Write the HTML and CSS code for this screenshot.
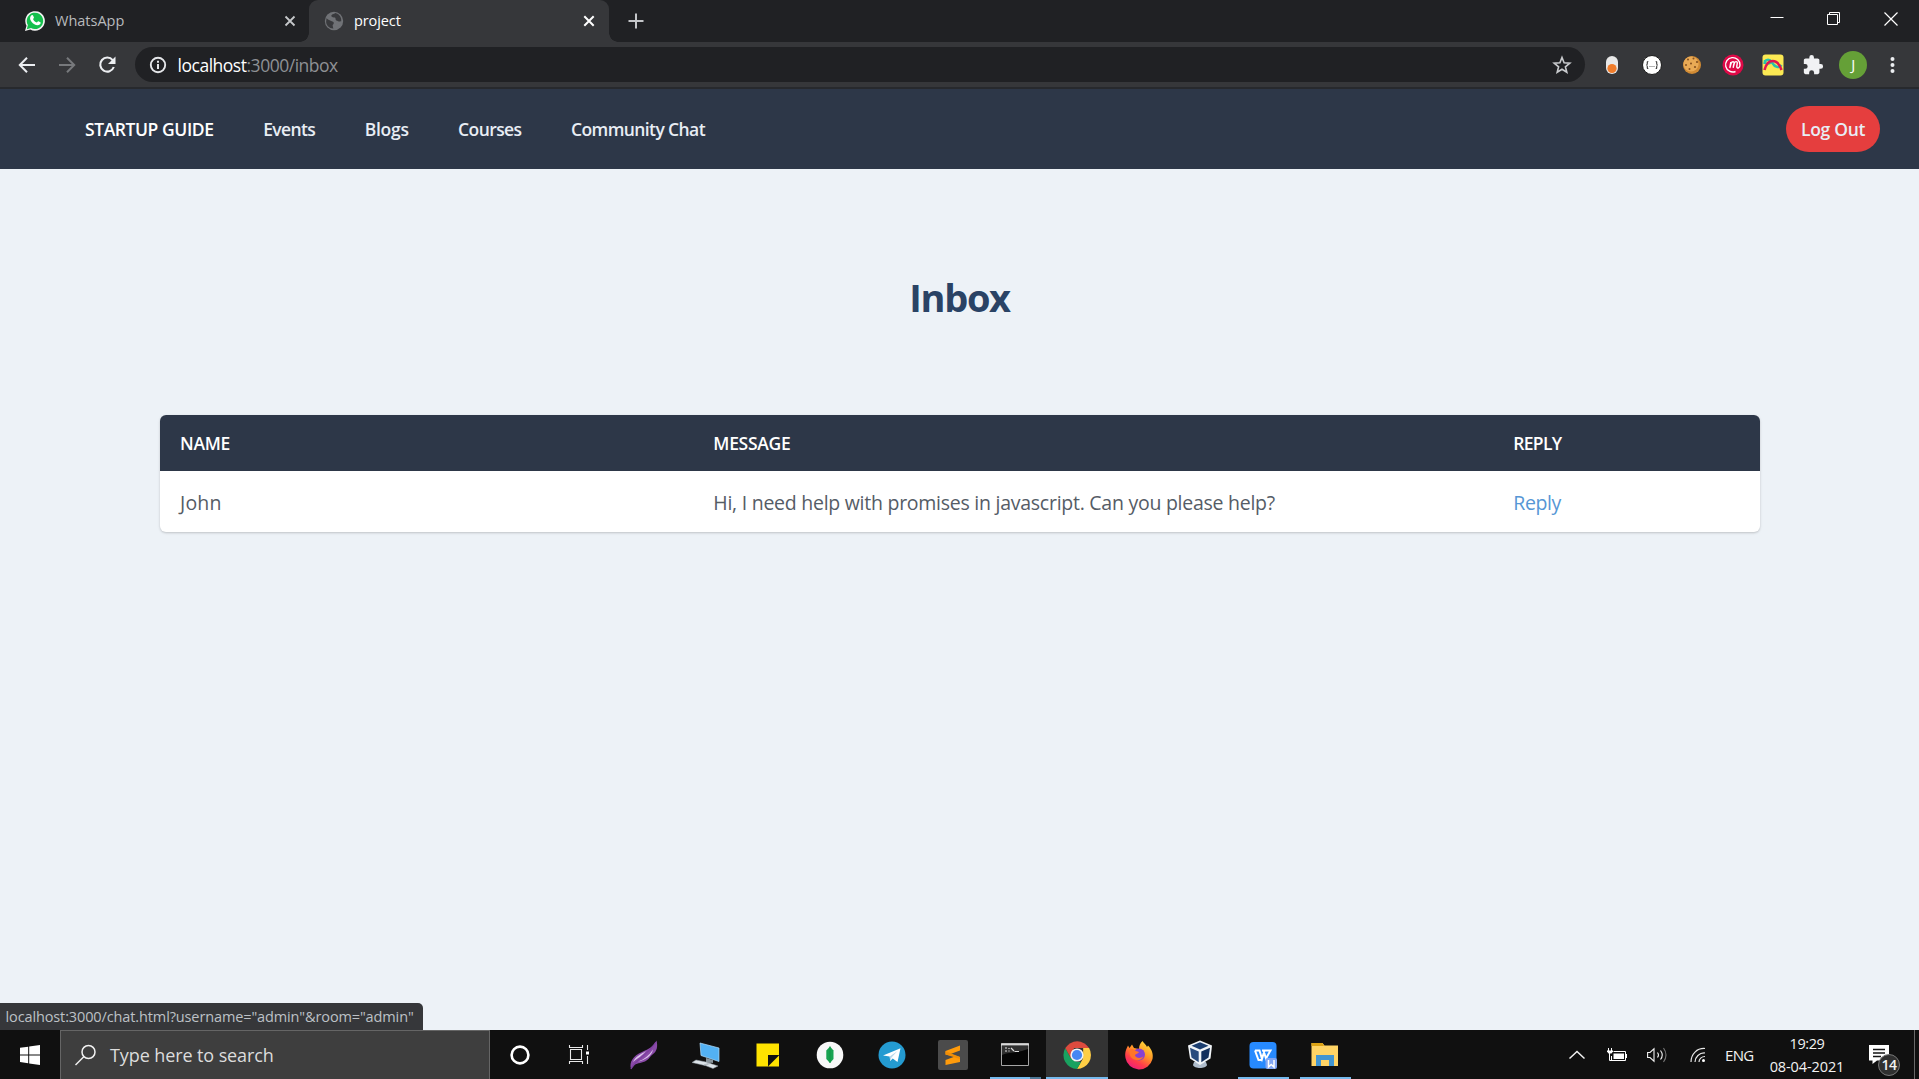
FILE: index.html
```html
<!DOCTYPE html>
<html lang="en">
<head>
<meta charset="utf-8">
<title>project</title>
<link rel="stylesheet" href="styles.css">
</head>
<body>
<div class="screen">
  <header class="tabstrip">
    <div class="tab">
      <svg class="favicon" width="22" height="22" viewBox="0 0 22 22"><path d="M1 21l1.500-5.300A9.800 9.800 0 1 1 6.300 19.500z" fill="#f4f4f4"/><path d="M2.800 19.200l1.100-4.100A8.200 8.200 0 1 1 7 18.100z" fill="#14bf4c"/><path d="M7.300 5.500c.8-.7 1.600-.5 1.900.3l.7 1.700c.2.500-.6 1.200-.9 1.600.8 1.700 2 2.800 3.800 3.500.6-.5 1-1.500 1.600-1.300l2 1c.6.400.2 1.700-.7 2.300-2.400 1.600-6-.1-8.200-2.900C5.700 9.200 5.600 7 7.300 5.500z" fill="#fff"/></svg>
      <span class="tab-title">WhatsApp</span>
      <svg class="tab-close" width="12" height="12" viewBox="0 0 12 12"><path d="M1.500 1.500l9 9M10.500 1.500l-9 9" stroke="#c6c8cb" stroke-width="1.800"/></svg>
    </div>
    <div class="tab tab-active">
      <svg class="favicon" width="20" height="20" viewBox="0 0 20 20"><circle cx="10" cy="10" r="9.200" fill="#707276"/><path d="M2.500 7.200c2 2.100 4 2.300 6.500 3.600 1.500.9.800 2.300-.4 3.100.2 1.500.4 2.300.8 3.500-4 .2-7-2.900-7.300-6.400zM11.300 1.900c-1.500 1.300-4 1.200-4 3 .3 1.500 2.400 1.100 3.700 1.700 1 .7.100 2.300 1.300 2.800 1.600.5 2.500 1.300 4.900.9.600-4-2-7.600-5.900-8.400z" fill="#393a3d"/></svg>
      <span class="tab-title">project</span>
      <svg class="tab-close" width="12" height="12" viewBox="0 0 12 12"><path d="M1.300 1.300l9.400 9.400M10.700 1.300l-9.400 9.400" stroke="#fff" stroke-width="2"/></svg>
    </div>
    <svg class="new-tab" width="16" height="16" viewBox="0 0 16 16"><path d="M8 .5v15M.5 8h15" stroke="#c4c6c9" stroke-width="2"/></svg>
    <div class="window-buttons">
      <svg width="14" height="14" viewBox="0 0 14 14"><path d="M.5 5.500h13" stroke="#fff"/></svg>
      <svg width="14" height="14" viewBox="0 0 14 14"><path d="M.5 2.500h10v10H.5zM2.500 2.500v-2h10v10h-2" fill="none" stroke="#fff"/></svg>
      <svg width="14" height="14" viewBox="0 0 14 14"><path d="M.5.5l13 13M13.500.5l-13 13" stroke="#fff" stroke-width="1.200"/></svg>
    </div>
  </header>

  <div class="toolbar">
    <div class="history">
      <svg width="18" height="18" viewBox="0 0 18 18"><path d="M17 9H2M9 1.800L1.800 9 9 16.200" fill="none" stroke="#eceef1" stroke-width="2"/></svg>
      <svg width="18" height="18" viewBox="0 0 18 18"><path d="M1 9h15M9 1.800L16.200 9 9 16.200" fill="none" stroke="#77797c" stroke-width="2"/></svg>
      <svg width="18" height="18" viewBox="0 0 18 18"><path d="M14.700 4.200A7 7 0 1 0 15.800 11" fill="none" stroke="#eceef1" stroke-width="2.100"/><path d="M17.500.5v7.500H10z" fill="#eceef1"/></svg>
    </div>
    <div class="address">
      <svg width="18" height="18" viewBox="0 0 18 18"><circle cx="9" cy="9" r="7.200" fill="none" stroke="#e4e6e9" stroke-width="1.900"/><path d="M9 8v5M9 4.700v2" stroke="#e4e6e9" stroke-width="2"/></svg>
      <span class="url">localhost<span class="url-rest">:3000/inbox</span></span>
      <svg class="star" width="20" height="20" viewBox="0 0 20 20"><path d="M10 2.500l2.100 5.300 5.700.4-4.400 3.600 1.400 5.500-4.800-3-4.800 3 1.400-5.500L2.200 8.200l5.700-.4z" fill="none" stroke="#c9cbce" stroke-width="1.600"/></svg>
    </div>
    <div class="extensions">
      <svg width="22" height="22" viewBox="0 0 22 22"><rect x="5" y="2" width="12" height="18" rx="6" fill="#e8e8e8"/><circle cx="11" cy="14.500" r="4.600" fill="#f07c2b"/></svg>
      <svg width="22" height="22" viewBox="0 0 22 22"><circle cx="11" cy="11" r="9.500" fill="#fff" stroke="#1c1c1c" stroke-width="1"/><path d="M7.300 7.500c-1.300 0-1 .8-1 1.700 0 1-.2 1.800-1 1.800.8 0 1 .8 1 1.800 0 .9-.3 1.700 1 1.700M14.700 7.500c1.300 0 1 .8 1 1.700 0 1 .2 1.800 1 1.800-.8 0-1 .8-1 1.800 0 .9.300 1.700-1 1.700" fill="none" stroke="#333" stroke-width="1.100"/><path d="M8.500 12.500h1M10.500 12.500h1M12.500 12.500h1" stroke="#666"/></svg>
      <svg width="22" height="22" viewBox="0 0 22 22"><circle cx="11" cy="11" r="9" fill="#d08a34"/><circle cx="10" cy="10" r="7.600" fill="#e9aa55"/><g fill="#85501f"><circle cx="7" cy="5.500" r="1"/><circle cx="12.500" cy="4.500" r="1"/><circle cx="16" cy="8" r="1.100"/><circle cx="10" cy="9.500" r="1"/><circle cx="5" cy="11" r="1"/><circle cx="14" cy="13" r="1.100"/><circle cx="8.500" cy="15" r="1"/></g></svg>
      <svg width="22" height="22" viewBox="0 0 22 22"><circle cx="11" cy="11" r="10.500" fill="#df0947"/><path d="M13.500 17.500A7.200 7.200 0 1 1 18 11c0 3.500-3.400 4-3.200 1.200l.5-3c.2-2.200-2.300-2-3 0l-1.200 4.600.9-4.400c.4-2.300-2.100-2.200-2.900 0L7.800 14l1-6" fill="none" stroke="#fff" stroke-width="1.400"/></svg>
      <svg width="22" height="22" viewBox="0 0 22 22"><rect x=".5" y=".5" width="21" height="21" rx="3" fill="#fbe953"/><path d="M2.500 10c0-5 5-5.500 7.500-1.500 3 5 7 6 9.500 2.500" fill="none" stroke="#27c3ac" stroke-width="2.400"/><path d="M2.500 6c0 5 5 5 7 2" fill="none" stroke="#27c3ac" stroke-width="1.600"/><path d="M2.500 16C5.500 4 15.500 4 19.500 16" fill="none" stroke="#df1650" stroke-width="2.600"/></svg>
      <svg width="22" height="22" viewBox="0 0 24 24"><path d="M20.500 11H19V7c0-1.100-.9-2-2-2h-4V3.500a2.500 2.500 0 0 0-5 0V5H4c-1.100 0-2 .9-2 2v3.800h1.500a2.700 2.700 0 0 1 0 5.400H2V20c0 1.100.9 2 2 2h3.800v-1.500a2.700 2.700 0 0 1 5.400 0V22H17c1.100 0 2-.9 2-2v-4h1.500a2.500 2.500 0 0 0 0-5z" fill="#f1f2f4"/></svg>
      <span class="avatar">J</span>
      <svg width="22" height="22" viewBox="0 0 22 22" fill="#eceef1"><circle cx="10.500" cy="5" r="2"/><circle cx="10.500" cy="11" r="2"/><circle cx="10.500" cy="17" r="2"/></svg>
    </div>
  </div>

  <main class="page">
    <nav class="navbar">
      <a class="brand">STARTUP GUIDE</a>
      <a class="nav-link">Events</a>
      <a class="nav-link nav-blogs">Blogs</a>
      <a class="nav-link">Courses</a>
      <a class="nav-link">Community Chat</a>
      <a class="logout">Log Out</a>
    </nav>
    <h1 class="title">Inbox</h1>
    <section class="inbox">
      <div class="row head"><span>NAME</span><span>MESSAGE</span><span class="head-reply">REPLY</span></div>
      <div class="row"><span class="sender">John</span><span>Hi, I need help with promises in javascript. Can you please help?</span><a class="reply">Reply</a></div>
    </section>
    <div class="status">localhost:3000/chat.html?username="admin"&amp;room="admin"</div>
  </main>

  <footer class="taskbar">
    <div class="start"><svg width="20" height="20" viewBox="0 0 20 20" fill="#fff"><path d="M0 2.800l8.200-1.100v7.700H0zM9.200 1.500L20 0v9.400H9.200zM0 10.400h8.200v7.800L0 17.100zM9.200 10.400H20V20L9.200 18.400z"/></svg></div>
    <div class="search">
      <svg width="22" height="22" viewBox="0 0 22 22" fill="none" stroke="#f2f2f2" stroke-width="1.500"><circle cx="13.500" cy="8" r="6.500"/><path d="M9 12.500L.5 21"/></svg>
      <span>Type here to search</span>
    </div>
    <div class="app app-cortana"><svg width="30" height="30" viewBox="0 0 30 30"><circle cx="15" cy="15" r="8.400" fill="none" stroke="#fff" stroke-width="2.600"/></svg></div>
    <div class="app"><svg width="30" height="30" viewBox="0 0 30 30" fill="none" stroke="#e8e8e8" stroke-width="1.100"><path d="M5.500 9.500h11v10h-11zM4.500 5v2.500h13V5M4.500 24v-2.500h13V24M22.500 5v5M22.500 16v8"/><path d="M21 11.500h3v3h-3z" fill="#fff" stroke="none"/></svg></div>
    <div class="app"><svg width="30" height="30" viewBox="0 0 30 30"><path d="M2 29c-2-7 2-13 11-17C20 9 25 6 27.500.5c1.500 6 .5 11-4 14-2 1.500-3 4-6 6-4 3-9 2-12 4.500z" fill="#8a4ba8"/><path d="M4 22c2-5 8-8 13-11-4 5-8 7-13 11zM9 21.500c6-2 11-6 15-12-1 6-8 11-15 12z" fill="#ddc6ec"/><path d="M2 29C6 20 19 15 27 2" fill="none" stroke="#7d3fa0" stroke-width="1.300"/></svg></div>
    <div class="app"><svg width="30" height="30" viewBox="0 0 30 30"><path d="M9 3l19 5v13.500l-18-6z" fill="#53b1f3" stroke="#b4ddf8" stroke-width=".7"/><path d="M15 18l7 2v3l-7-1z" fill="#89959c"/><path d="M13 25l5-2 9 3-5 2.500zM1 22.500l4-2.500L20 23l-6 2.500z" fill="#dce3e8" stroke="#909ba2" stroke-width=".5"/></svg></div>
    <div class="app"><svg width="30" height="30" viewBox="0 0 30 30"><path d="M3.500 3.500H26V15H15v11.500H3.500z" fill="#ffe300"/><path d="M26 15.500v11H15z" fill="#ffe300"/></svg></div>
    <div class="app"><svg width="30" height="30" viewBox="0 0 30 30"><circle cx="15" cy="15" r="13.300" fill="#f8f8f8"/><path d="M15 6.500l3.500 4v8.500L15 23l-3.700-4v-8.500z" fill="#18a351"/><path d="M15 6.500V23" stroke="#139647"/></svg></div>
    <div class="app"><svg width="30" height="30" viewBox="0 0 30 30"><circle cx="15" cy="15" r="13.500" fill="#249bd1"/><path d="M6 15.500L23.500 8.300 20.500 22l-4.800-3.500-2.500 2.600-.5-4.600z" fill="#fff"/><path d="M12.700 16.500l7.800-5.500-6 6.500-1.300 3.600z" fill="#b9d9eb"/></svg></div>
    <div class="app"><svg width="30" height="30" viewBox="0 0 30 30"><rect width="30" height="30" rx="2" fill="#4b4b4b"/><path d="M7.500 11L22 5.500v5L12.500 14 22 17v5L7.500 25v-5l9.500-3.500-9.500-2z" fill="#ff9b0b"/><path d="M7.500 14.500v-3.300L22 17v2z" fill="#f08e08"/></svg></div>
    <div class="app open"><svg width="30" height="30" viewBox="0 0 30 30"><path d="M1.500 3.500h27v22h-27z" fill="#050505" stroke="#a5a5a5"/><path d="M2 15C8 12 18 13 28 9V6H2z" fill="#303030"/><path d="M1 4.500h28" stroke="#d8d8d8" stroke-width="2"/><path d="M5 8h2M5 11h2M9 8v1M9 10.500v1M11 8l3 3M14.500 11.500H19" stroke="#ddd" stroke-width="1.200"/></svg></div>
    <div class="app current"><svg width="30" height="30" viewBox="0 0 30 30"><path d="M3.300 8A14 14 0 0 1 27.100 8H15z" fill="#dc4b3e"/><path d="M27.100 8A14 14 0 0 1 15 29l6-10.500L21.200 8z" fill="#ffce45"/><path d="M15 29A14 14 0 0 1 3.300 8L9 18.500l6 3.500h4z" fill="#1aa260"/><path d="M3.300 8L9 18.300 12 8z" fill="#dc4b3e"/><circle cx="15" cy="15" r="6.600" fill="#f3f3f3"/><circle cx="15" cy="15" r="5.100" fill="#4587f3"/></svg></div>
    <div class="app"><svg width="30" height="30" viewBox="0 0 30 30"><defs><linearGradient id="fox" x1=".9" y1="0" x2=".3" y2="1"><stop offset="0" stop-color="#ffe83e"/><stop offset=".45" stop-color="#ff9526"/><stop offset=".75" stop-color="#ff3c4b"/><stop offset="1" stop-color="#ee1d7c"/></linearGradient></defs><path d="M18.500 1c1 2 4 4 4.500 6l1-1.500c4 4 5.500 9 4.500 13.500A13.800 13.800 0 0 1 1.500 18C.5 12 2.500 8.500 4 5.500L5.500 8 8 4.500 10 8l5 1c0-3 1-6 3.500-8z" fill="url(#fox)"/><circle cx="15" cy="14.500" r="6" fill="#8741d2"/><path d="M5 10c3-2 5-1 7 1l3 1c-1 2-4 2-4 3.500 1 3 6 3 8.500 1-2 5-11 5-13.500-1z" fill="#ff7528"/></svg></div>
    <div class="app app-box"><svg width="30" height="30" viewBox="0 0 30 30"><path d="M9 22l-1 3c1 4 13 4 14 0l-1-3z" fill="#aebccb"/><path d="M3 5.500L15 .5l12 5-1.500 13L15 25 5 18.500z" fill="#f1f5f8"/><path d="M6.500 5.700L15 2.300l8.500 3.400L15 9.500z" fill="#1b3e70"/><path d="M5 7.800l8.700 3.800v10.600L6.500 17.500z" fill="#294c7d"/><path d="M25 7.800l-8.700 3.800v10.600l7.200-4.700z" fill="#12305d"/></svg></div>
    <div class="app open solid"><svg width="30" height="30" viewBox="0 0 30 30"><rect x="1.500" y="2" width="27" height="26.500" rx="4" fill="#278aff"/><path d="M7 10.500h4.500l2.500 8.500 2.500-8.500M7 10.500L10.500 20h3M15.500 10.500l2.500 8L22.500 10.500H14" fill="none" stroke="#fff" stroke-width="2"/><rect x="17.500" y="18" width="11.500" height="11" rx="2" fill="#81a6f4"/><path d="M20.500 20v7l2.700-2.500L26 27v-7" fill="none" stroke="#fff" stroke-width="1.500"/></svg></div>
    <div class="app open solid"><svg width="30" height="30" viewBox="0 0 30 30"><path d="M1.500 3h11l2 2.500h13.500V26H1.500z" fill="#ffd465"/><path d="M1.500 3h11l1.500 3H1.500z" fill="#dca315"/><path d="M6 26V15h18v11h-5v-6h-8v6z" fill="#4295d1"/></svg></div>
    <div class="tray">
      <svg class="chevron" width="18" height="10" viewBox="0 0 18 10"><path d="M1.500 8.500L9 1.500l7.500 7" fill="none" stroke="#f2f2f2" stroke-width="1.500"/></svg>
      <svg class="battery" width="20" height="14" viewBox="0 0 20 14"><path d="M6.500 3.500h12v9H4.500V8" fill="none" stroke="#fff"/><path d="M6.500 5.500h10.500v5.500H6.500z" fill="#fff"/><path d="M19.500 6v4M1.500 0v3M4.500 0v3M2.500 5v7.500H5" fill="none" stroke="#fff"/><path d="M0 2.500h6v1L4.500 5.500h-3L0 3.500z" fill="#fff"/></svg>
      <svg class="volume" width="21" height="18" viewBox="0 0 21 18" fill="none" stroke="#f2f2f2" stroke-width="1.100"><path d="M.6 6.500H3L7 2.800v12.400L3 11.500H.6z"/><path d="M10.500 6.500q2 2.500 0 5M13.500 4.500q3.500 4.500 0 9"/><path d="M16.500 2q5 7 0 14" stroke="#777"/></svg>
      <svg class="wifi" width="16" height="16" viewBox="0 0 16 16" fill="none" stroke="#e8e8e8" stroke-width="1.200"><path d="M1 15C1 7 7 1 15 1.500M5 15c0-5 4.500-9.500 10-9M9 15c0-3 2.500-5.500 6-5.500"/><circle cx="13.500" cy="13.500" r="1.500" fill="#fff" stroke="none"/></svg>
      <span class="lang">ENG</span>
      <div class="clock"><span class="time">19:29</span><span>08-04-2021</span></div>
      <div class="notifications">
        <svg width="21" height="20" viewBox="0 0 21 20"><path d="M0 0h20v15.500H8L3.500 19v-3.500H0z" fill="#fff"/><path d="M4 4.500h12M4 8h12M4 11.500h8" stroke="#151515" stroke-width="1.300"/></svg>
        <span class="count">14</span>
      </div>
    </div>
  </footer>
</div>
</body>
</html>
```

FILE: styles.css
```css
* { box-sizing: border-box; }
body { margin: 0; font-family: "Open Sans", "Noto Sans", sans-serif; }
svg { display: block; flex: none; }
.screen { width: 1919px; height: 1079px; display: flex; flex-direction: column; overflow: hidden; white-space: nowrap; }

/* Browser window */
.tabstrip { height: 42px; flex: none; display: flex; align-items: center; background: #202124; }
.tab { height: 42px; width: 309px; padding: 0 13px 0 24px; display: flex; align-items: center; color: #b8babd; font-size: 14.5px; }
.tab-title { flex: 1; margin-left: 9px; padding-bottom: 2px; }
.tab-active { position: relative; width: 300px; padding: 0 14px 0 15px; background: #36373a; color: #fff; border-radius: 9px 9px 0 0; letter-spacing: -0.1px; }
.tab-active::before, .tab-active::after { content: ""; position: absolute; bottom: 0; width: 9px; height: 9px; }
.tab-active::before { left: -9px; background: radial-gradient(circle at 0 0, #202124 8.5px, #36373a 9px); }
.tab-active::after { right: -9px; background: radial-gradient(circle at 100% 0, #202124 8.5px, #36373a 9px); }
.tab-active .tab-title { margin-left: 10px; }
.new-tab { margin-left: 19px; }
.window-buttons { margin: 0 21px 5px auto; display: flex; gap: 43px; }
.toolbar { height: 47px; flex: none; display: flex; align-items: center; background: #36373a; border-bottom: 2px solid #27292d; }
.history { width: 135px; padding-left: 18px; display: flex; gap: 22px; }
.address { width: 1450px; height: 35px; padding: 0 13px 0 13.5px; display: flex; align-items: center; border-radius: 18px; background: #202124; color: #fff; font-size: 17.5px; letter-spacing: -0.48px; }
.url { margin-left: 11px; }
.url-rest { color: #8e9094; }
.star { margin-left: auto; }
.extensions { padding-left: 7px; display: grid; grid-template-columns: repeat(8, 40.2px); justify-items: center; align-items: center; }
.avatar { width: 28px; height: 28px; border-radius: 50%; background: #65a037; color: #fff; font-size: 15px; line-height: 27px; text-align: center; }

/* Application page */
.page { position: relative; flex: 1; background: #edf2f7; }
.navbar { height: 80px; padding: 0 39px 0 85px; display: flex; align-items: center; gap: 49.5px; background: #2d3748; color: #e8edf4; font-size: 17.5px; font-weight: 600; letter-spacing: -0.6px; }
.brand { color: #fff; letter-spacing: -0.42px; }
.nav-blogs { letter-spacing: -0.3px; }
.logout { margin-left: auto; width: 94px; height: 46px; line-height: 46px; text-align: center; border-radius: 23px; background: #e53e3e; letter-spacing: -0.3px; }
.title { margin: 102px 0 0; height: 52px; line-height: 52px; text-align: center; color: #2a4365; font-size: 38px; font-weight: 700; letter-spacing: -1.3px; }
.inbox { width: 1600px; margin: 92px 0 0 160px; border-radius: 6px; overflow: hidden; background: #fff; box-shadow: 0 1px 3px rgba(0,0,0,.13), 0 1px 2px rgba(0,0,0,.08); }
.row { height: 61px; display: grid; grid-template-columns: 4fr 6fr 2fr; align-items: center; color: #555c66; font-size: 19.5px; letter-spacing: -0.26px; padding-top: 1px; }
.row > * { padding-left: 20px; }
.head { height: 56px; padding: 0 0 1px; background: #2d3748; color: #fff; font-size: 17.5px; font-weight: 600; letter-spacing: -0.3px; }
.head .head-reply { letter-spacing: -0.7px; }
.sender { letter-spacing: 0.2px; }
.reply { color: #5696d5; letter-spacing: -0.4px; }
.status { position: absolute; left: 0; bottom: 0; width: 423px; height: 27px; line-height: 27px; padding-left: 5.5px; border-top-right-radius: 5px; background: #36373a; color: #bdc1c6; font-size: 14.5px; letter-spacing: -0.12px; }

/* Taskbar */
.taskbar { height: 49px; flex: none; display: flex; background: #101010; color: #f2f2f2; }
.start { width: 60px; display: grid; place-items: center; }
.search { width: 430px; padding-left: 14px; display: flex; align-items: center; gap: 13px; background: #3e3e3e; border: 1px solid #656565; border-bottom: 0; color: #dcdcdc; font-size: 18px; letter-spacing: -0.1px; }
.app { width: 61.9px; display: grid; place-items: center; position: relative; }
.app-cortana { width: 60px; }
.app-cortana + .app { width: 63px; padding-right: 4px; }
.app-box { padding-right: 2px; }
.open::after, .current::after { content: ""; position: absolute; bottom: 0; left: 6px; width: 51px; height: 2px; background: linear-gradient(90deg, #76b9ed 40px, #4e7896 40px); }
.solid::after, .current::after { background: #76b9ed; }
.current { background: #333; }
.current::after { left: 0; width: 100%; }
.tray { margin-left: auto; width: 351px; display: flex; align-items: center; }
.battery { margin-left: 21px; }
.volume { margin-left: 20px; }
.wifi { margin-left: 22px; }
.lang { margin-left: 19px; width: 29px; font-size: 15px; letter-spacing: -0.7px; }
.clock { margin-left: 14px; width: 78px; display: flex; flex-direction: column; align-items: center; font-size: 14.5px; line-height: 23px; letter-spacing: -0.1px; }
.time { letter-spacing: -0.4px; }
.notifications { position: relative; margin-left: 23px; width: 46px; height: 49px; padding-top: 15px; border-right: 1px solid #696969; }
.count { position: absolute; left: 9px; top: 24px; width: 22px; height: 22px; border: 1px solid #777; border-radius: 50%; background: #303030; font-size: 14px; font-weight: 600; line-height: 20px; text-align: center; letter-spacing: -0.5px; }
```
